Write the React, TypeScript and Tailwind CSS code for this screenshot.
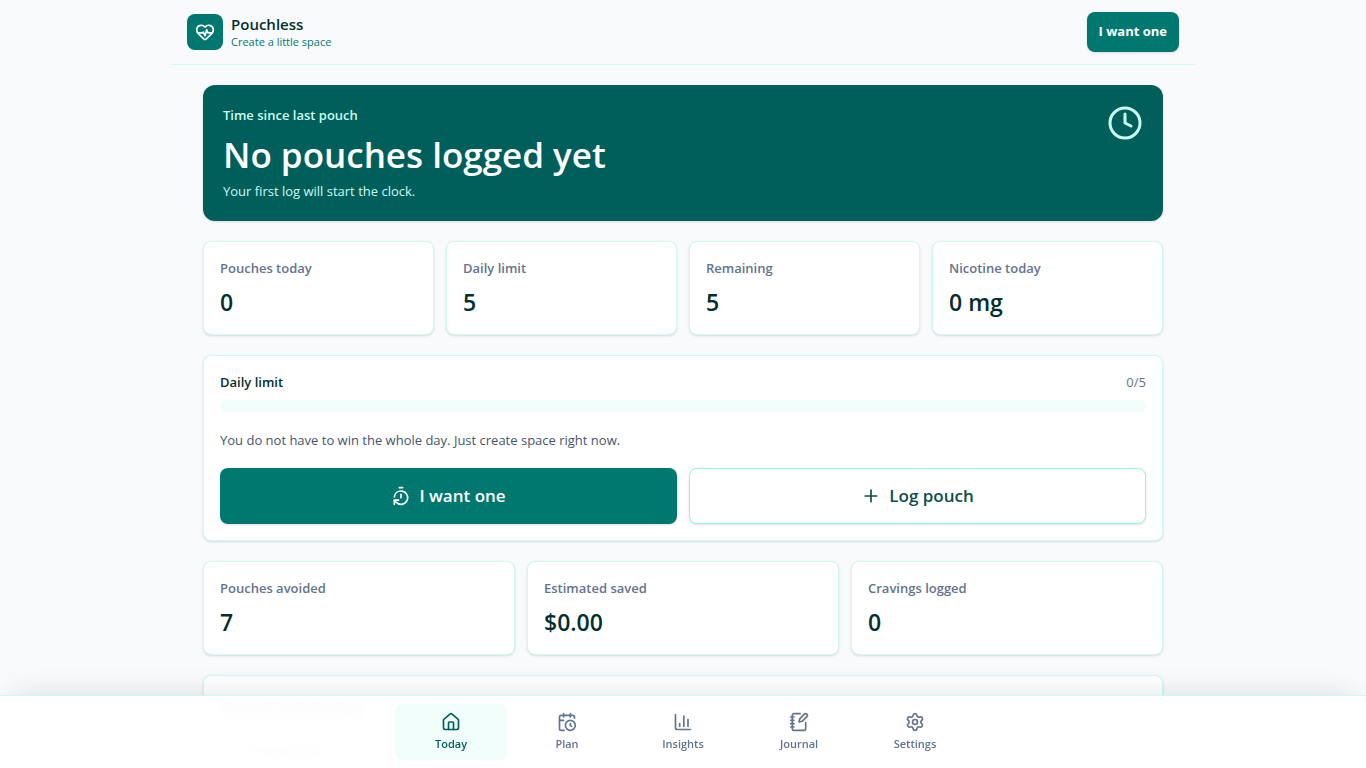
import {
  CalendarClock,
  ChartColumn,
  Clock,
  HeartPulse,
  House,
  NotebookPen,
  Plus,
  Settings,
  TimerReset,
  type LucideIcon,
} from "lucide-react";

const navItems: { label: string; icon: LucideIcon }[] = [
  { label: "Today", icon: House },
  { label: "Plan", icon: CalendarClock },
  { label: "Insights", icon: ChartColumn },
  { label: "Journal", icon: NotebookPen },
  { label: "Settings", icon: Settings },
];

function StatCard({ label, value }: { label: string; value: string }) {
  return (
    <div className="rounded-lg border border-teal-100 bg-white p-4 shadow-sm">
      <p className="text-[13px] leading-5 font-semibold text-slate-500">{label}</p>
      <p className="mt-2 text-[23px] leading-8 font-semibold text-teal-950">{value}</p>
    </div>
  );
}

function BottomNav({ active }: { active: string }) {
  return (
    <nav
      aria-label="Main"
      className="fixed inset-x-0 bottom-0 z-20 border-t border-teal-100 bg-white/95 py-2 shadow-[0_-12px_30px_-12px_rgba(15,23,42,0.12)] backdrop-blur"
    >
      <div className="mx-auto grid max-w-xl grid-cols-5 gap-1">
        {navItems.map(({ label, icon: Icon }) => (
          <button
            key={label}
            type="button"
            aria-current={label === active ? "page" : undefined}
            className={
              label === active
                ? "flex min-h-14 flex-col items-center justify-center gap-1 rounded-lg bg-teal-50 text-[11px] leading-4 font-semibold text-teal-800"
                : "flex min-h-14 flex-col items-center justify-center gap-1 rounded-lg text-[11px] leading-4 font-semibold text-slate-500"
            }
          >
            <Icon size={20} aria-hidden="true" />
            {label}
          </button>
        ))}
      </div>
    </nav>
  );
}

export default function App() {
  const used = 0;
  const limit = 5;

  return (
    <div className="min-h-screen bg-slate-50 font-['Open_Sans','Noto_Sans',sans-serif] text-slate-900">
      <header className="mx-auto flex max-w-5xl items-center justify-between border-b border-teal-100 px-4 py-3">
        <div className="flex items-center gap-2">
          <div className="grid size-9 place-items-center rounded-lg bg-teal-700 text-white">
            <HeartPulse size={20} aria-hidden="true" />
          </div>
          <div>
            <p className="text-[15px] leading-5 font-semibold text-teal-950">Pouchless</p>
            <p className="text-[11px] leading-4 text-teal-700">Create a little space</p>
          </div>
        </div>
        <button
          type="button"
          className="h-10 rounded-lg bg-teal-700 px-3 text-[13px] font-bold text-white shadow-sm"
        >
          I want one
        </button>
      </header>

      <main className="mx-auto max-w-5xl space-y-5 px-8 pt-5 pb-28">
        <section className="flex items-start justify-between rounded-xl bg-teal-800 p-5 text-white shadow-sm">
          <div>
            <p className="text-[13px] leading-5 font-semibold text-teal-100">Time since last pouch</p>
            <h1 className="mt-2 text-[35px] leading-11 font-semibold">No pouches logged yet</h1>
            <p className="mt-1 text-[13px] leading-5 text-teal-100">Your first log will start the clock.</p>
          </div>
          <Clock size={36} className="text-teal-100" aria-hidden="true" />
        </section>

        <section className="grid grid-cols-2 gap-3 md:grid-cols-4">
          <StatCard label="Pouches today" value="0" />
          <StatCard label="Daily limit" value="5" />
          <StatCard label="Remaining" value="5" />
          <StatCard label="Nicotine today" value="0 mg" />
        </section>

        <section className="rounded-lg border border-teal-100 bg-white p-4 shadow-sm">
          <div className="mb-2 flex items-center justify-between text-[13px] leading-5">
            <h2 className="font-semibold text-teal-950">Daily limit</h2>
            <span className="text-slate-500">
              {used}/{limit}
            </span>
          </div>
          <div className="h-3 overflow-hidden rounded-full bg-teal-50">
            <div className="h-full rounded-full bg-teal-600" style={{ width: `${(used / limit) * 100}%` }} />
          </div>
          <p className="mt-4 text-[13px] leading-6 text-slate-600">
            You do not have to win the whole day. Just create space right now.
          </p>
          <div className="mt-4 grid gap-3 sm:grid-cols-2">
            <button
              type="button"
              className="flex min-h-14 items-center justify-center gap-2 rounded-lg bg-teal-700 text-[17px] font-semibold text-white shadow-sm"
            >
              <TimerReset size={20} aria-hidden="true" />
              I want one
            </button>
            <button
              type="button"
              className="flex min-h-14 items-center justify-center gap-2 rounded-lg border border-teal-200 bg-white text-[17px] font-semibold text-teal-900 shadow-sm"
            >
              <Plus size={20} aria-hidden="true" />
              Log pouch
            </button>
          </div>
        </section>

        <section className="grid gap-3 sm:grid-cols-3">
          <StatCard label="Pouches avoided" value="7" />
          <StatCard label="Estimated saved" value="$0.00" />
          <StatCard label="Cravings logged" value="0" />
        </section>

        <section className="rounded-lg border border-teal-100 bg-white p-4 shadow-sm">
          <h2 className="leading-8 font-semibold text-teal-950">Recent activity log</h2>
          <p className="mt-4 px-3 text-[13px] leading-5 text-slate-500">Nothing logged yet</p>
        </section>
      </main>

      <BottomNav active="Today" />
    </div>
  );
}
